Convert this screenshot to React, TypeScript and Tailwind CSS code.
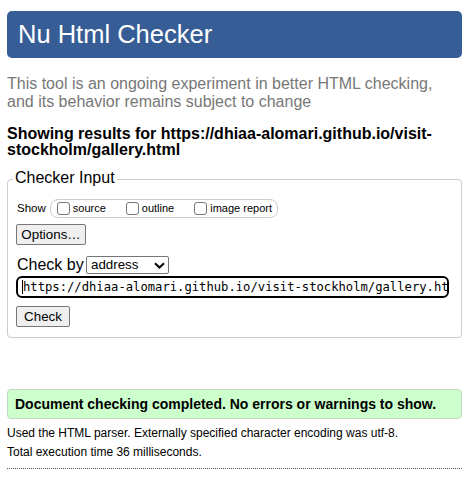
import React from "react";

const options = ["source", "outline", "image report"];

function Box() {
    return <span className="inline-block h-[13px] w-[13px] shrink-0 rounded-[3px] border border-[#767676] bg-white" />;
}

export default function App() {
    return (
        <div className="h-[479px] w-[471px] overflow-hidden bg-white font-['Liberation_Sans',Arial,sans-serif] text-black">
            <div className="ml-[7px] w-[455px] pt-[11px]">
                <h1 className="h-[47px] rounded-[5px] bg-[#365d95] pl-[11px] text-[25.5px] leading-[47px] text-white">Nu Html Checker</h1>

                <p className="mt-[17px] text-[16px] leading-[18px] text-[#777]">
                    This tool is an ongoing experiment in better HTML checking,<br />
                    and its behavior remains subject to change
                </p>

                <p className="mt-[15px] text-[16px] font-bold leading-[16px]">
                    Showing results for https://dhiaa-alomari.github.io/visit-<br />
                    stockholm/gallery.html
                </p>

                <fieldset className="mt-[11px] rounded-[4px] border border-[#ccc] pb-[10px] pl-[8px]">
                    <legend className="-ml-[3px] px-[2px] pb-[3px] text-[16px] leading-[18px]">Checker Input</legend>

                    <div className="mt-[9px] flex h-[19px] items-center">
                        <span className="ml-[1px] mr-[4px] text-[11.5px]">Show</span>
                        <div className="flex h-[19px] items-center rounded-[8px] border border-[#ccc] pl-[6px] pr-[5px]">
                            {options.map((o, i) => (
                                <label key={o} className={`flex items-center gap-[3px] text-[11px] ${i < options.length - 1 ? "mr-[20px]" : ""}`}>
                                    <Box />
                                    {o}
                                </label>
                            ))}
                        </div>
                    </div>

                    <button className="mt-[6px] block h-[21px] w-[70px] rounded-[2px] border border-[#767676] bg-[#efefef] text-center text-[13.33px]">
                        Options…
                    </button>

                    <div className="mt-[10px] flex h-[20px] items-center">
                        <span className="ml-[1px] w-[69px] text-[16px]">Check by</span>
                        <div className="flex h-[18px] w-[83px] items-center justify-between rounded-[2px] border border-[#767676] bg-white pl-[4px] pr-[3px] text-[13.33px]">
                            <span>address</span>
                            <svg width="11" height="7" viewBox="0 0 11 7" fill="none">
                                <path d="M1 1.2 5.5 5.5 10 1.2" stroke="#000" strokeWidth="2" />
                            </svg>
                        </div>
                    </div>

                    <div className="mt-[1px] flex h-[22px] w-[433px] items-center overflow-hidden whitespace-nowrap rounded-[6px] border-2 border-black pl-[4px] font-['DejaVu_Sans_Mono',Consolas,monospace] text-[12.2px]">
                        <span className="h-[14px] w-[1px] shrink-0 bg-black" />
                        <span>https://dhiaa-alomari.github.io/visit-stockholm/gallery.html</span>
                    </div>

                    <button className="mt-[8px] block h-[21px] w-[54px] rounded-[2px] border border-[#767676] bg-[#efefef] text-center text-[13.33px]">
                        Check
                    </button>
                </fieldset>

                <div className="mt-[51px] flex h-[30px] items-center rounded-[4px] border border-[#c4d9c4] bg-[#ccffcc] pl-[7px] text-[14px] font-bold">
                    Document checking completed. No errors or warnings to show.
                </div>

                <p className="mt-[7px] text-[12px] leading-[14px]">Used the HTML parser. Externally specified character encoding was utf-8.</p>
                <p className="mt-[5px] text-[12px] leading-[14px]">Total execution time 36 milliseconds.</p>

                <div className="mt-[9px] border-t border-dotted border-[#555]" />
            </div>
        </div>
    );
}
